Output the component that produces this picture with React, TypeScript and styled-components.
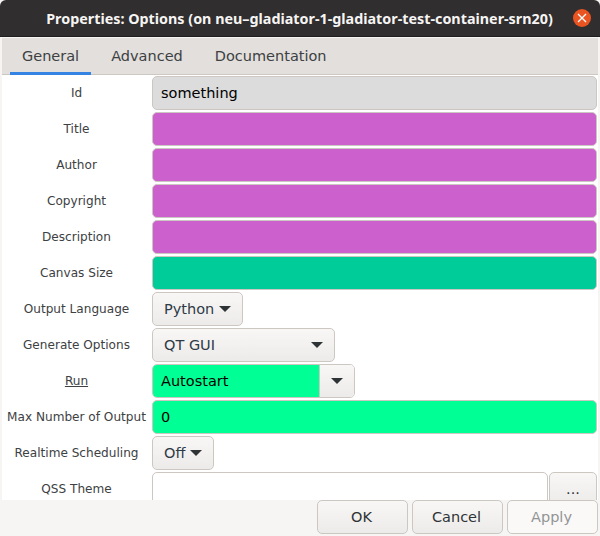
import { ReactNode } from 'react'
import styled, { createGlobalStyle } from 'styled-components'

const GlobalStyle = createGlobalStyle`
  html, body {
    margin: 0;
    padding: 0;
    background: #f6f5f4;
  }
`

const Window = styled.div`
  width: 600px;
  height: 536px;
  display: flex;
  flex-direction: column;
  overflow: hidden;
  background: #f6f5f4;
  font-family: 'DejaVu Sans', sans-serif;
  color: #2e3436;
`

const TitleBar = styled.header`
  height: 37px;
  flex: none;
  box-sizing: border-box;
  display: flex;
  align-items: center;
  background: #302e2e;
  border-bottom: 1px solid #1f1e1e;
  border-radius: 6px 6px 0 0;
  padding-right: 9px;
`

const Title = styled.h1`
  flex: 1;
  margin: 0;
  text-align: center;
  padding-left: 26px;
  font: 700 14.34px 'Noto Sans', sans-serif;
  color: #f6f5f4;
  white-space: nowrap;
`

const CloseButton = styled.button`
  width: 18px;
  height: 18px;
  padding: 0;
  border: 0;
  border-radius: 50%;
  background: #e95420;
  display: flex;
  align-items: center;
  justify-content: center;
`

const Notebook = styled.div`
  flex: 1;
  min-height: 0;
  display: flex;
  flex-direction: column;
  margin: 1px 2px 0;
  background: #fff;
`

const TabBar = styled.nav`
  height: 37px;
  flex: none;
  box-sizing: border-box;
  display: flex;
  padding-left: 8px;
  background: #e2dfdc;
  border-bottom: 1px solid #cdc7c2;
`

const Tab = styled.div<{ $active?: boolean }>`
  height: 37px;
  box-sizing: border-box;
  padding: 10px 12px 0;
  margin-right: 8px;
  font-size: 14.5px;
  color: #3d4143;
  border-bottom: 3px solid ${p => (p.$active ? '#3584e4' : 'transparent')};
`

const Form = styled.div`
  flex: 1;
  min-height: 0;
  overflow: hidden;
  display: flex;
  flex-direction: column;
  gap: 2px;
  padding: 1px 1px 0 0;
`

const Row = styled.div`
  height: 34px;
  flex: none;
  display: flex;
  align-items: center;
`

const Label = styled.label<{ $underline?: boolean }>`
  width: 149px;
  margin-right: 1px;
  flex: none;
  text-align: center;
  font-size: 12.1px;
  white-space: nowrap;
  color: #3d4143;
  text-decoration: ${p => (p.$underline ? 'underline' : 'none')};
`

const Entry = styled.div<{ $bg?: string }>`
  flex: 1;
  height: 34px;
  box-sizing: border-box;
  padding: 0 8px;
  display: flex;
  align-items: center;
  font-size: 14.5px;
  color: #000;
  background: ${p => p.$bg ?? '#fff'};
  border: 1px solid #cdc7c2;
  border-radius: 5px;
`

const ComboButton = styled.div<{ $width: number }>`
  width: ${p => p.$width}px;
  height: 34px;
  box-sizing: border-box;
  padding: 0 11px;
  display: flex;
  align-items: center;
  justify-content: space-between;
  font-size: 14.5px;
  color: #2e3a46;
  background: linear-gradient(#f8f7f6, #edebe9);
  border: 1px solid #cdc7c2;
  border-radius: 5px;
`

const Caret = styled.span`
  width: 0;
  height: 0;
  border-left: 6px solid transparent;
  border-right: 6px solid transparent;
  border-top: 6px solid #2e3436;
`

const ComboEntry = styled.div`
  width: 203px;
  height: 34px;
  box-sizing: border-box;
  display: flex;
  border: 1px solid #cdc7c2;
  border-radius: 5px;
  overflow: hidden;
`

const ComboText = styled.div`
  flex: 1;
  padding-left: 8px;
  display: flex;
  align-items: center;
  font-size: 14.5px;
  color: #000;
  background: #00ff94;
`

const ComboArrow = styled.div`
  width: 34px;
  display: flex;
  align-items: center;
  justify-content: center;
  background: linear-gradient(#f8f7f6, #edebe9);
  border-left: 1px solid #cdc7c2;
`

const BrowseButton = styled.div`
  width: 48px;
  height: 34px;
  flex: none;
  box-sizing: border-box;
  margin-left: 1px;
  text-align: center;
  font-size: 14.5px;
  line-height: 32px;
  background: linear-gradient(#f8f7f6, #edebe9);
  border: 1px solid #cdc7c2;
  border-radius: 5px;
`

const Footer = styled.footer`
  height: 36px;
  flex: none;
  box-sizing: border-box;
  display: flex;
  justify-content: flex-end;
  gap: 4px;
  padding: 0 2px 0 0;
  margin: 0 -2px;
  background: #f6f5f4;
`

const DialogButton = styled.button<{ $disabled?: boolean }>`
  width: 91px;
  height: 34px;
  box-sizing: border-box;
  padding: 0 2px 0 0;
  font: 14.5px 'DejaVu Sans', sans-serif;
  color: ${p => (p.$disabled ? '#929595' : '#2e3436')};
  background: ${p => (p.$disabled ? '#faf9f8' : 'linear-gradient(#f8f7f6, #edebe9)')};
  border: 1px solid #cdc7c2;
  border-radius: 5px;
`

const purple = '#cc60cc'

function Field({ label, children, underline }: { label: string; children: ReactNode; underline?: boolean }) {
  return (
    <Row>
      <Label $underline={underline}>{label}</Label>
      {children}
    </Row>
  )
}

export default function App() {
  return (
    <Window>
      <GlobalStyle />
      <TitleBar>
        <Title>Properties: Options (on neu–gladiator-1-gladiator-test-container-srn20)</Title>
        <CloseButton aria-label="Close">
          <svg width="10" height="10" viewBox="0 0 10 10">
            <path d="M1 1 L9 9 M9 1 L1 9" stroke="#fff" strokeWidth="1.3" />
          </svg>
        </CloseButton>
      </TitleBar>
      <Notebook>
        <TabBar>
          <Tab $active>General</Tab>
          <Tab>Advanced</Tab>
          <Tab>Documentation</Tab>
        </TabBar>
        <Form>
          <Field label="Id"><Entry $bg="#dcdcdc">something</Entry></Field>
          <Field label="Title"><Entry $bg={purple} /></Field>
          <Field label="Author"><Entry $bg={purple} /></Field>
          <Field label="Copyright"><Entry $bg={purple} /></Field>
          <Field label="Description"><Entry $bg={purple} /></Field>
          <Field label="Canvas Size"><Entry $bg="#00cc9a" /></Field>
          <Field label="Output Language">
            <ComboButton $width={91}>Python <Caret /></ComboButton>
          </Field>
          <Field label="Generate Options">
            <ComboButton $width={183}>QT GUI <Caret /></ComboButton>
          </Field>
          <Field label="Run" underline>
            <ComboEntry>
              <ComboText>Autostart</ComboText>
              <ComboArrow><Caret /></ComboArrow>
            </ComboEntry>
          </Field>
          <Field label="Max Number of Output"><Entry $bg="#00ff94">0</Entry></Field>
          <Field label="Realtime Scheduling">
            <ComboButton $width={62}>Off <Caret /></ComboButton>
          </Field>
          <Field label="QSS Theme">
            <Entry />
            <BrowseButton>...</BrowseButton>
          </Field>
        </Form>
        <Footer>
          <DialogButton>OK</DialogButton>
          <DialogButton>Cancel</DialogButton>
          <DialogButton $disabled>Apply</DialogButton>
        </Footer>
      </Notebook>
    </Window>
  )
}
